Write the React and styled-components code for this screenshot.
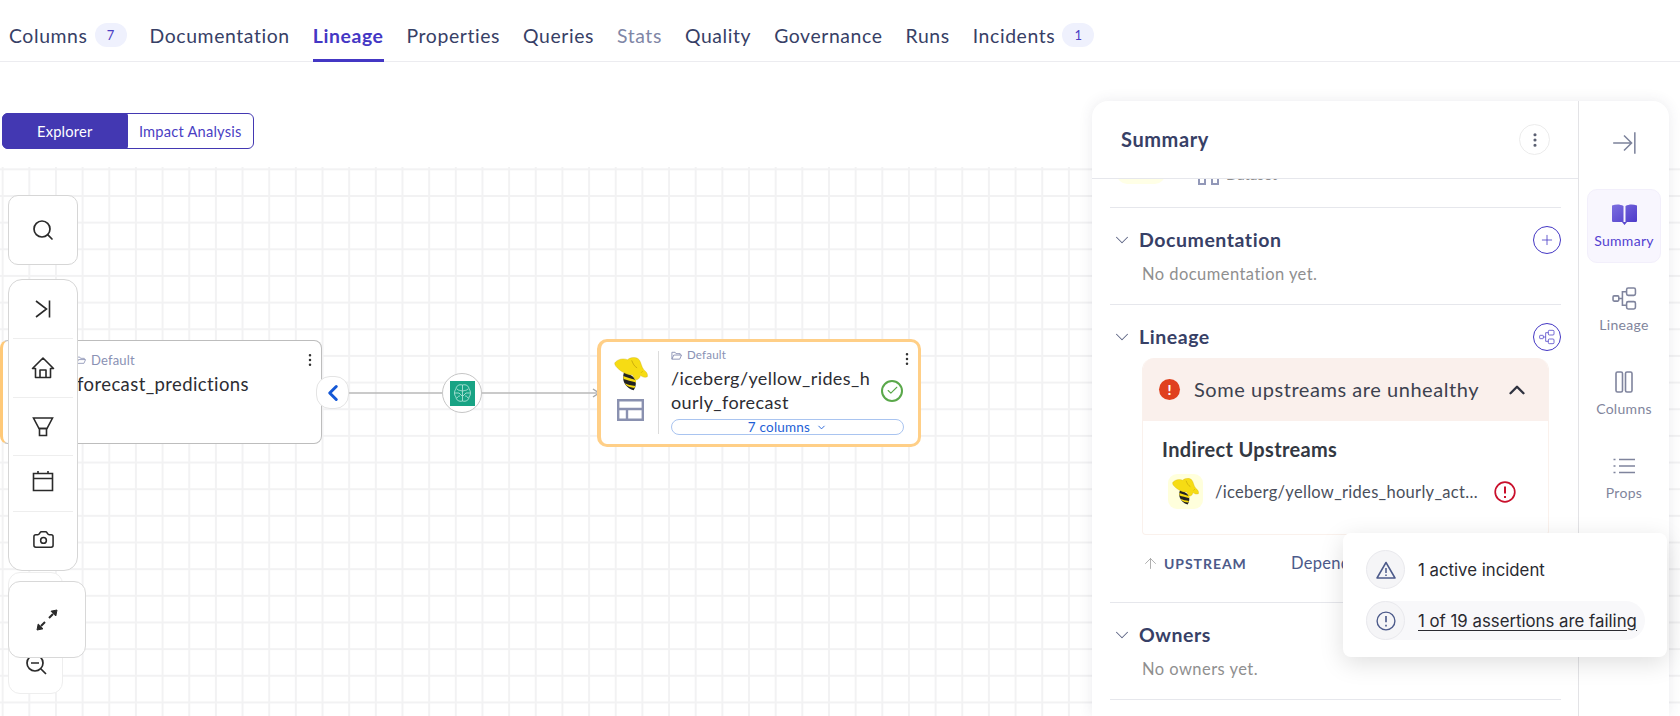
import React from "react";
import styled, { createGlobalStyle } from "styled-components";
import { Search, Camera, MoreVertical, Plus, ChevronDown, ChevronUp, ArrowUp, ChevronLeft, Check } from "lucide-react";

const Global = createGlobalStyle`
  html, body { margin: 0; padding: 0; background: #fff; }
  body { font-family: "Lato", "Noto Sans", sans-serif; color: #374066; }
  * { box-sizing: border-box; }
`;

const tabs = [
  { label: "Columns", badge: 7 },
  { label: "Documentation" },
  { label: "Lineage", active: true },
  { label: "Properties" },
  { label: "Queries" },
  { label: "Stats", muted: true },
  { label: "Quality" },
  { label: "Governance" },
  { label: "Runs" },
  { label: "Incidents", badge: 1 },
];

function HiveLogo({ size = 34 }) {
  return (
    <svg width={size} height={size} viewBox="0 0 100 100">
      <path d="M30 44C40 50 52 52 60 62C66 74 66 86 58 98C44 94 32 84 28 70C26 60 27 50 30 44Z" fill="#222" />
      <path d="M27 56C38 60 50 64 64 68L65 75C50 72 38 68 28 65ZM32 77C40 81 50 84 63 85L60 91C50 90 42 87 37 84Z" fill="#f5d90f" />
      <path d="M2 18C8 8 24 2 40 8C48 0 66 -2 74 8C80 16 80 28 88 38C96 44 100 50 98 58C90 62 82 58 78 54C76 62 70 70 62 66C58 60 56 56 54 52C40 54 24 44 14 36C8 30 2 26 2 18Z" fill="#f6dc14" stroke="#c9a90a" strokeWidth="1" />
      <path d="M52 10C56 20 60 28 68 32M84 42L80 46" fill="none" stroke="#b8980a" strokeWidth="2" />
    </svg>
  );
}

function CollapseIcon() {
  return (
    <svg width="26" height="26" viewBox="0 0 24 24" fill="none" stroke="#7c829b" strokeWidth="1.4">
      <path d="M2 12H19M12 5L19 12L12 19M22 2V22" />
    </svg>
  );
}

function SkipIcon() {
  return (
    <svg width="18" height="18" viewBox="0 0 18 18" fill="none" stroke="#2a2a2a" strokeWidth="1.6">
      <path d="M2 1L12.5 9L2 17M15.5 0.5V17.5" />
    </svg>
  );
}

function HomeIcon() {
  return (
    <svg width="24" height="24" viewBox="0 0 24 24" fill="none" stroke="#2a2a2a" strokeWidth="1.6" strokeLinejoin="round">
      <path d="M1.5 12.5L12 2L22.5 12.5H19.5V21.5H4.5V12.5Z" />
      <path d="M9 21.5V14H15V21.5" />
    </svg>
  );
}

function FunnelIcon() {
  return (
    <svg width="22" height="20" viewBox="0 0 22 20" fill="none" stroke="#2a2a2a" strokeWidth="1.6">
      <path d="M1.5 1H20.5L15 11.5H7Z" />
      <path d="M7.5 11.5H14.5V18.5H7.5Z" />
    </svg>
  );
}

function CalendarIcon() {
  return (
    <svg width="22" height="22" viewBox="0 0 22 22" fill="none" stroke="#2a2a2a" strokeWidth="1.6">
      <path d="M1.5 3.5H20.5V20.5H1.5ZM1.5 8.5H20.5M6 1V4M16 1V4" />
    </svg>
  );
}

function ExpandIcon() {
  return (
    <svg width="22" height="22" viewBox="0 0 22 22" fill="#2a2a2a" stroke="#2a2a2a">
      <path d="M21 1L15 2.2L19.8 7Z" />
      <path d="M1 21L7 19.8L2.2 15Z" />
      <path d="M17 5L13 9M9 13L5 17" fill="none" strokeWidth="2" />
    </svg>
  );
}

function ZoomOutIcon() {
  return (
    <svg width="22" height="22" viewBox="0 0 22 22" fill="none" stroke="#2a2a2a" strokeWidth="1.7">
      <circle cx="10" cy="10" r="8" />
      <path d="M6 10H14M16 16L21 21" />
    </svg>
  );
}

function FolderIcon({ size = 10, color = "#8a91b4" }) {
  return (
    <svg width={size} height={size} viewBox="0 0 12 12" fill="none" stroke={color} strokeWidth="1">
      <path d="M1 10V2.5H4.5L5.5 4H10V5.5M1 10L3 5.5H11.5L9.5 10Z" />
    </svg>
  );
}

function TableIcon() {
  return (
    <svg width="27" height="22" viewBox="0 0 27 22" fill="none" stroke="#8a91b0" strokeWidth="2.4">
      <path d="M1.2 1.2H25.8V20.8H1.2ZM1.2 10H25.8M10 10V20.8" />
    </svg>
  );
}

function BrainIcon() {
  return (
    <svg width="25" height="25" viewBox="0 0 25 25">
      <rect width="25" height="25" fill="#18a384" />
      <g fill="none" stroke="#bfeadf" strokeWidth="0.8">
        <path d="M12.5 4C9 3 6 5 6 8C4 10 4 14 6 16C6 19 9 21 12.5 20C16 21 19 19 19 16C21 14 21 10 19 8C19 5 16 3 12.5 4Z" />
        <path d="M12.5 4V20M7 8C9 10 10 9 12 10M18 8C16 10 15 9 13 10M5 12H9L12 15M20 12H16L13 15M7 17C8 15 9 15 10 15M18 17C17 15 16 15 15 15" />
      </g>
    </svg>
  );
}

function TreeIcon({ size = 16, color = "#4437c4", width = 1.1 }) {
  return (
    <svg width={size} height={size} viewBox="0 0 24 24" fill="none" stroke={color} strokeWidth={width}>
      <rect x="1" y="9.5" width="5.5" height="5" rx="1" />
      <rect x="14" y="2" width="8.5" height="7" rx="1.5" />
      <rect x="14" y="15" width="8.5" height="7" rx="1.5" />
      <path d="M6.5 12H10M14 5.5H10V18.5H14" />
    </svg>
  );
}

function BookIcon() {
  return (
    <svg width="25" height="21" viewBox="0 0 25 21">
      <defs>
        <linearGradient id="bookFill" x1="0" y1="0" x2="1" y2="1">
          <stop offset="0" stopColor="#7d6fe0" />
          <stop offset="1" stopColor="#4a37c8" />
        </linearGradient>
      </defs>
      <path d="M0 1.5C4 0 8 0 11.5 2V18H1.5C0.5 18 0 17.5 0 16.5ZM25 1.5C21 0 17 0 13.5 2V18H23.5C24.5 18 25 17.5 25 16.5ZM10 18H15L12.5 21Z" fill="url(#bookFill)" />
    </svg>
  );
}

function ColumnsIcon() {
  return (
    <svg width="18" height="22" viewBox="0 0 18 22" fill="none" stroke="#7f849d" strokeWidth="1.6">
      <rect x="1" y="1" width="6.5" height="20" rx="1.5" />
      <rect x="10.5" y="1" width="6.5" height="20" rx="1.5" />
    </svg>
  );
}

function PropsIcon() {
  return (
    <svg width="22" height="16" viewBox="0 0 22 16" fill="none" stroke="#7f849d" strokeWidth="1.5">
      <path d="M6 1.5H22M6 8H22M6 14.5H22M0.5 1.5H2.5M0.5 8H2.5M0.5 14.5H2.5" />
    </svg>
  );
}

function AlertCircle({ size = 22, color = "#c9102c", width = 1.7 }) {
  return (
    <svg width={size} height={size} viewBox="0 0 22 22" fill="none" stroke={color} strokeWidth={width}>
      <circle cx="11" cy="11" r="9.8" />
      <path d="M11 5.5V12.5M11 15V17" strokeWidth={width + 0.3} />
    </svg>
  );
}

function WarningIcon() {
  return (
    <svg width="20" height="18" viewBox="0 0 20 18" fill="none" stroke="#4c5a8a" strokeWidth="1.5" strokeLinejoin="round">
      <path d="M10 1.5L19 17H1Z" />
      <path d="M10 7V12M10 13.5V15" />
    </svg>
  );
}

export default function App() {
  return (
    <Page>
      <Global />
      <TabBar>
        {tabs.map((t) => (
          <Tab key={t.label} $active={t.active} $muted={t.muted}>
            {t.label}
            {t.badge && <Badge>{t.badge}</Badge>}
          </Tab>
        ))}
      </TabBar>

      <Toggle>
        <ToggleOption $on>Explorer</ToggleOption>
        <ToggleOption>Impact Analysis</ToggleOption>
      </Toggle>

      <Canvas>
        <NodeOne>
          <Kebab $top={11} $right={3}><MoreVertical size={16} strokeWidth={1.8} color="#333" /></Kebab>
          <NodePath>
            <FolderIcon size={10} />
            Default
          </NodePath>
          <NodeName>forecast_predictions</NodeName>
        </NodeOne>

        <Edges width="290" height="20" viewBox="0 0 290 20" fill="none">
          <path d="M0 10H93M132 10H248" stroke="#b9b9b9" strokeWidth="1.6" />
          <path d="M244 6L250 10L244 14" stroke="#a8a8a8" strokeWidth="1.5" />
        </Edges>
        <CollapseEdge><ChevronLeft size={26} strokeWidth={2.8} color="#1558d6" /></CollapseEdge>
        <TaskNode><BrainIcon /></TaskNode>

        <NodeTwo>
          <NodeLogos>
            <HiveLogo size={34} />
            <TableIcon />
          </NodeLogos>
          <NodeBody>
            <NodePathSmall>
              <FolderIcon size={11} />
              Default
            </NodePathSmall>
            <TitleRow>
              <NodeTitle>/iceberg/yellow_rides_h<br />ourly_forecast</NodeTitle>
              <HealthyMark><Check size={13} strokeWidth={2} color="#5aa84a" /></HealthyMark>
            </TitleRow>
            <ColumnsPill>
              7 columns <ChevronDown size={11} strokeWidth={2} />
            </ColumnsPill>
          </NodeBody>
          <Kebab $top={9} $right={3}><MoreVertical size={16} strokeWidth={1.8} color="#333" /></Kebab>
        </NodeTwo>

        <ZoomBack><ZoomOutSlot><ZoomOutIcon /></ZoomOutSlot></ZoomBack>
        <Controls>
          <ControlCard><Search size={24} strokeWidth={1.7} color="#2a2a2a" /></ControlCard>
          <ControlGroup>
            <ControlRow $h={59} $line $lift={1}><SkipIcon /></ControlRow>
            <ControlRow $h={59} $line><HomeIcon /></ControlRow>
            <ControlRow $h={58} $line><FunnelIcon /></ControlRow>
            <ControlRow $h={56} $line $lift={5}><CalendarIcon /></ControlRow>
            <ControlRow $h={58} $lift={3}><Camera size={23} strokeWidth={1.6} color="#2a2a2a" /></ControlRow>
          </ControlGroup>
        </Controls>
        <ExpandCard><ExpandIcon /></ExpandCard>
      </Canvas>

      <Panel>
        <PanelMain>
          <PanelHeader>
            <PanelTitle>Summary</PanelTitle>
            <RoundBtn><MoreVertical size={18} strokeWidth={2.2} color="#5b6072" /></RoundBtn>
          </PanelHeader>
          <Scroller>
            <Identity>
              <IdentityLogo />
              <IdentityIcons><i /><i /></IdentityIcons>
              <IdentityText>Dataset</IdentityText>
            </Identity>

            <Section>
              <SectionHead>
                <ChevronDown size={22} strokeWidth={1.1} color="#5c6484" />
                <SectionTitle>Documentation</SectionTitle>
                <ActionBtn><Plus size={16} strokeWidth={1.2} /></ActionBtn>
              </SectionHead>
              <EmptyText>No documentation yet.</EmptyText>
            </Section>

            <Section>
              <SectionHead>
                <ChevronDown size={22} strokeWidth={1.1} color="#5c6484" />
                <SectionTitle>Lineage</SectionTitle>
                <ActionBtn><TreeIcon /></ActionBtn>
              </SectionHead>
              <HealthBox>
                <HealthHead>
                  <RedDot>!</RedDot>
                  <HealthText>Some upstreams are unhealthy</HealthText>
                  <ChevronUp size={26} strokeWidth={2.2} color="#2f3340" />
                </HealthHead>
                <HealthBody>
                  <HealthSub>Indirect Upstreams</HealthSub>
                  <UpstreamRow>
                    <LogoTile><HiveLogo size={27} /></LogoTile>
                    <UpstreamName>/iceberg/yellow_rides_hourly_actuals</UpstreamName>
                    <AlertCircle />
                  </UpstreamRow>
                </HealthBody>
              </HealthBox>
              <FooterRow>
                <ArrowUp size={17} strokeWidth={1.2} color="#a0a0a0" />
                <UpstreamLabel>UPSTREAM</UpstreamLabel>
                <DepLabel>Dependencies</DepLabel>
              </FooterRow>
            </Section>

            <Section>
              <SectionHead>
                <ChevronDown size={22} strokeWidth={1.1} color="#5c6484" />
                <SectionTitle>Owners</SectionTitle>
              </SectionHead>
              <EmptyText>No owners yet.</EmptyText>
            </Section>
          </Scroller>
        </PanelMain>

        <Rail>
          <RailCollapse><CollapseIcon /></RailCollapse>
          <RailItem $active><RailIcon><BookIcon /></RailIcon>Summary</RailItem>
          <RailItem><RailIcon><TreeIcon size={25} color="#7f849d" width={1.5} /></RailIcon>Lineage</RailItem>
          <RailItem><RailIcon><ColumnsIcon /></RailIcon>Columns</RailItem>
          <RailItem><RailIcon><PropsIcon /></RailIcon>Props</RailItem>
        </Rail>
      </Panel>

      <Popover>
        <PopRow>
          <PopIcon><WarningIcon /></PopIcon>
          <PopText>1 active incident</PopText>
        </PopRow>
        <PopRow $pill>
          <PopIcon><AlertCircle size={20} color="#4c5a8a" width={1.5} /></PopIcon>
          <PopLink>1 of 19 assertions are failing</PopLink>
        </PopRow>
      </Popover>
    </Page>
  );
}

const Page = styled.div`
  position: relative;
  width: 1680px;
  height: 716px;
  overflow: hidden;
  display: flex;
  flex-direction: column;
  background: #fff;
`;

const TabBar = styled.div`
  display: flex;
  gap: 23px;
  height: 62px;
  padding-left: 9px;
  border-bottom: 1px solid #ececf0;
  flex: none;
`;

const Tab = styled.div`
  display: flex;
  align-items: center;
  gap: 7px;
  height: 62px;
  padding-top: 12px;
  border-bottom: 3px solid ${(p) => (p.$active ? "#4437c4" : "transparent")};
  font-size: 19.4px;
  letter-spacing: 0.6px;
  font-weight: ${(p) => (p.$active ? 700 : 400)};
  color: ${(p) => (p.$active ? "#4437c4" : p.$muted ? "#7f86a6" : "#374066")};
`;

const Badge = styled.span`
  width: 32px;
  height: 24px;
  margin-top: -1px;
  border-radius: 12px;
  background: #eff1fd;
  color: #4b3fc4;
  font-size: 13px;
  display: flex;
  align-items: center;
  justify-content: center;
  letter-spacing: 0;
  font-weight: 400;
`;

const Toggle = styled.div`
  display: flex;
  flex: none;
  width: 252px;
  height: 36px;
  margin: 51px 0 18px 2px;
  border: 1px solid #4338b2;
  border-radius: 6px;
`;

const ToggleOption = styled.div`
  flex: 1;
  display: flex;
  align-items: center;
  justify-content: center;
  margin: ${(p) => (p.$on ? "-1px 0 -1px -1px" : "0")};
  border-radius: ${(p) => (p.$on ? "6px 3px 3px 6px" : "0")};
  background: ${(p) => (p.$on ? "#4338b2" : "transparent")};
  color: ${(p) => (p.$on ? "#fff" : "#4b3fc4")};
  font-size: 14.7px;
  letter-spacing: 0.2px;
`;

const Canvas = styled.div`
  position: relative;
  flex: 1;
  background-color: #fff;
  background-image:
    linear-gradient(#f2f2f3 2px, transparent 2px),
    linear-gradient(90deg, #f2f2f3 2px, transparent 2px);
  background-size: 26.67px 26.67px;
  background-position: 1.67px 1.33px;
`;

const Kebab = styled.div`
  position: absolute;
  top: ${(p) => p.$top}px;
  right: ${(p) => p.$right}px;
  display: flex;
`;

const NodeOne = styled.div`
  position: absolute;
  left: 0;
  top: 173px;
  width: 322px;
  height: 104px;
  background: #fff;
  border: 1px solid #bdbdbd;
  border-left: 3px solid #ffc978;
  border-radius: 8px;
  padding: 11px 0 0 73px;
`;

const NodePath = styled.div`
  display: flex;
  align-items: center;
  gap: 5px;
  font-size: 13px;
  line-height: 16px;
  letter-spacing: 0.2px;
  color: #8a91b4;
`;

const NodeName = styled.div`
  margin: 4px 0 0 1px;
  font-size: 18.5px;
  line-height: 24px;
  letter-spacing: 0.4px;
  color: #2d2d33;
`;

const Edges = styled.svg`
  position: absolute;
  left: 349px;
  top: 216px;
`;

const CollapseEdge = styled.div`
  position: absolute;
  left: 316px;
  top: 209px;
  width: 33px;
  height: 33px;
  display: flex;
  align-items: center;
  justify-content: center;
  background: #fff;
  border: 1px solid #e4e4e4;
  border-radius: 14px;
`;

const TaskNode = styled.div`
  position: absolute;
  left: 442px;
  top: 206px;
  width: 40px;
  height: 40px;
  border: 1px solid #c6c6c6;
  border-radius: 50%;
  background: #fff;
  display: flex;
  align-items: center;
  justify-content: center;
`;

const NodeTwo = styled.div`
  position: absolute;
  left: 597px;
  top: 172px;
  width: 324px;
  height: 108px;
  display: flex;
  background: #fff;
  border: 3px solid #ffcf87;
  border-left-width: 4px;
  border-radius: 10px;
`;

const NodeLogos = styled.div`
  width: 58px;
  margin: 9px 0 10px;
  padding: 6px 0 0 2px;
  display: flex;
  flex-direction: column;
  align-items: center;
  gap: 8px;
  border-right: 1px solid #dcdcdc;
  flex: none;
`;

const NodeBody = styled.div`
  flex: 1;
  padding: 6px 14px 0 12px;
`;

const NodePathSmall = styled.div`
  display: flex;
  align-items: center;
  gap: 5px;
  font-size: 11.5px;
  line-height: 14px;
  letter-spacing: 0.2px;
  color: #8a91b4;
`;

const TitleRow = styled.div`
  display: flex;
  align-items: center;
  gap: 5px;
  margin-top: 5px;
`;

const NodeTitle = styled.div`
  width: 205px;
  font-size: 18px;
  line-height: 23.5px;
  letter-spacing: 0.4px;
  white-space: nowrap;
  color: #2d2d33;
`;

const HealthyMark = styled.div`
  width: 22px;
  height: 22px;
  flex: none;
  display: flex;
  align-items: center;
  justify-content: center;
  border: 2px solid #5aa84a;
  border-radius: 50%;
`;

const ColumnsPill = styled.div`
  margin-top: 5px;
  height: 16px;
  display: flex;
  align-items: center;
  justify-content: center;
  gap: 6px;
  border: 1px solid #a9c4f0;
  border-radius: 8px;
  color: #1f5fd6;
  font-size: 13.5px;
  letter-spacing: 0.2px;
`;

const Controls = styled.div`
  position: absolute;
  left: 8px;
  top: 28px;
  width: 70px;
  display: flex;
  flex-direction: column;
  gap: 14px;
`;

const ControlCard = styled.div`
  height: 70px;
  display: flex;
  align-items: center;
  justify-content: center;
  background: #fff;
  border: 1px solid #d6d6d6;
  border-radius: 10px;
`;

const ControlGroup = styled.div`
  display: flex;
  flex-direction: column;
  background: #fff;
  border: 1px solid #d6d6d6;
  border-radius: 14px;
  padding: 0 4px;
`;

const ControlRow = styled.div`
  height: ${(p) => p.$h}px;
  padding-bottom: ${(p) => p.$lift || 0}px;
  display: flex;
  align-items: center;
  justify-content: center;
  border-bottom: ${(p) => (p.$line ? "1px solid #eeeeee" : "none")};
`;

const ZoomBack = styled.div`
  position: absolute;
  left: 8px;
  top: 405px;
  width: 55px;
  height: 122px;
  background: #fff;
  border: 1px solid #eeeeee;
  border-radius: 12px;
`;

const ZoomOutSlot = styled.div`
  position: absolute;
  left: 16px;
  bottom: 18px;
  display: flex;
`;

const ExpandCard = styled.div`
  position: absolute;
  left: 8px;
  top: 414px;
  width: 78px;
  height: 77px;
  display: flex;
  align-items: center;
  justify-content: center;
  background: #fff;
  border: 1px solid #d8d8d8;
  border-radius: 12px;
`;

const Panel = styled.div`
  position: absolute;
  left: 1092px;
  top: 101px;
  right: 11px;
  bottom: 0;
  display: flex;
  background: #fff;
  border-radius: 16px 16px 0 0;
  box-shadow: 0 0 14px rgba(60, 60, 90, 0.1);
`;

const PanelMain = styled.div`
  width: 486px;
  flex: none;
  display: flex;
  flex-direction: column;
  min-height: 0;
`;

const PanelHeader = styled.div`
  height: 78px;
  flex: none;
  display: flex;
  align-items: center;
  justify-content: space-between;
  padding: 0 28px 0 29px;
  border-bottom: 1px solid #e6e7ec;
`;

const PanelTitle = styled.div`
  padding-bottom: 2px;
  font-size: 20px;
  font-weight: 700;
  letter-spacing: 0.6px;
  color: #374066;
`;

const RoundBtn = styled.div`
  width: 31px;
  height: 31px;
  display: flex;
  align-items: center;
  justify-content: center;
  border: 1px solid #ececec;
  border-radius: 50%;
`;

const Scroller = styled.div`
  flex: 1;
  min-height: 0;
  overflow: hidden;
  padding: 0 17px 0 18px;
`;

const Identity = styled.div`
  height: 29px;
  display: flex;
  align-items: flex-start;
  overflow: hidden;
  border-bottom: 1px solid #e6e7ec;
`;

const IdentityLogo = styled.div`
  width: 48px;
  height: 48px;
  margin: -43px 0 0 7px;
  border-radius: 10px;
  background: #ffffe6;
`;

const IdentityIcons = styled.div`
  display: flex;
  gap: 5px;
  margin: -15px 0 0 33px;
  i {
    display: block;
    width: 8px;
    height: 21px;
    border: 2px solid #9298b8;
  }
`;

const IdentityText = styled.div`
  margin: -15px 0 0 7px;
  font-size: 15px;
  line-height: 20px;
  color: #8c8c8c;
`;

const Section = styled.div`
  padding: 18px 0 20px;
  border-bottom: 1px solid #e6e7ec;
`;

const SectionHead = styled.div`
  height: 28px;
  display: flex;
  align-items: center;
  gap: 6px;
  padding-left: 1px;
`;

const SectionTitle = styled.div`
  flex: 1;
  padding-bottom: 2px;
  font-size: 19.5px;
  font-weight: 700;
  letter-spacing: 0.55px;
  color: #374066;
`;

const ActionBtn = styled.div`
  width: 28px;
  height: 28px;
  display: flex;
  align-items: center;
  justify-content: center;
  color: #4437c4;
  border: 1px solid #4437c4;
  border-radius: 50%;
`;

const EmptyText = styled.div`
  margin: 10px 0 0 32px;
  font-size: 16.5px;
  line-height: 20px;
  letter-spacing: 0.45px;
  color: #8f8f8f;
`;

const HealthBox = styled.div`
  width: 407px;
  margin: 7px 0 0 32px;
  border-radius: 12px 12px 4px 4px;
  overflow: hidden;
  border: 1px solid #faf1ec;
  border-top: none;
`;

const HealthHead = styled.div`
  height: 63px;
  display: flex;
  align-items: center;
  padding: 0 18px 0 16px;
  background: #faf0ec;
`;

const RedDot = styled.div`
  width: 21px;
  height: 21px;
  flex: none;
  display: flex;
  align-items: center;
  justify-content: center;
  background: #e0401e;
  color: #fff;
  border-radius: 50%;
  font-size: 14px;
  font-weight: 900;
`;

const HealthText = styled.div`
  flex: 1;
  margin-left: 14px;
  padding-bottom: 2px;
  font-size: 20px;
  letter-spacing: 0.55px;
  color: #3d424f;
`;

const HealthBody = styled.div`
  height: 113px;
  padding: 17px 0 0 19px;
`;

const HealthSub = styled.div`
  font-size: 20px;
  line-height: 22px;
  font-weight: 700;
  letter-spacing: 0.35px;
  color: #333842;
`;

const UpstreamRow = styled.div`
  display: flex;
  align-items: center;
  margin: 14px 0 0 6px;
`;

const LogoTile = styled.div`
  width: 35px;
  height: 35px;
  flex: none;
  display: flex;
  align-items: center;
  justify-content: center;
  background: #ffffdc;
  border-radius: 9px;
`;

const UpstreamName = styled.div`
  width: 266px;
  margin: 0 13px 0 12px;
  font-size: 16.5px;
  letter-spacing: 0.3px;
  white-space: nowrap;
  overflow: hidden;
  text-overflow: ellipsis;
  color: #4a4f5c;
`;

const FooterRow = styled.div`
  height: 28px;
  display: flex;
  align-items: center;
  margin: 14px 0 5px 32px;
  color: #4c5a8a;
`;

const UpstreamLabel = styled.div`
  margin-left: 5px;
  width: 127px;
  font-size: 14px;
  font-weight: 700;
  letter-spacing: 0.95px;
`;

const DepLabel = styled.div`
  font-size: 16.5px;
  letter-spacing: 0.3px;
`;

const Rail = styled.div`
  flex: 1;
  border-left: 1px solid #e3e3e6;
  display: flex;
  flex-direction: column;
  align-items: center;
  gap: 10px;
`;

const RailCollapse = styled.div`
  height: 84px;
  margin-bottom: -6px;
  flex: none;
  display: flex;
  align-items: center;
  justify-content: center;
`;

const RailItem = styled.div`
  width: 74px;
  height: 74px;
  flex: none;
  padding-top: 12px;
  display: flex;
  flex-direction: column;
  align-items: center;
  border-radius: 10px;
  font-size: 14px;
  letter-spacing: 0.3px;
  background: ${(p) => (p.$active ? "#f8f6fe" : "transparent")};
  border: 1px solid ${(p) => (p.$active ? "#f2effb" : "transparent")};
  color: ${(p) => (p.$active ? "#533fd1" : "#81859c")};
`;

const RailIcon = styled.div`
  height: 24px;
  margin-bottom: 6px;
  display: flex;
  align-items: center;
  justify-content: center;
`;

const Popover = styled.div`
  position: absolute;
  left: 1343px;
  top: 533px;
  width: 324px;
  height: 124px;
  padding: 17px 0 0 23px;
  display: flex;
  flex-direction: column;
  gap: 12px;
  background: #fff;
  border-radius: 8px;
  box-shadow: 0 6px 24px rgba(0, 0, 0, 0.13);
`;

const PopRow = styled.div`
  display: flex;
  align-items: center;
  gap: 13px;
  width: 279px;
  height: 39px;
  border-radius: 20px;
  background: ${(p) => (p.$pill ? "#f8f8fa" : "transparent")};
`;

const PopIcon = styled.div`
  width: 39px;
  height: 39px;
  flex: none;
  display: flex;
  align-items: center;
  justify-content: center;
  background: #f5f5f7;
  border: 1px solid #e9e9ed;
  border-radius: 50%;
`;

const PopText = styled.div`
  font-family: "Inter", sans-serif;
  font-size: 16.8px;
  color: #2a2a30;
`;

const PopLink = styled(PopText)`
  text-decoration: underline;
  text-underline-offset: 3px;
`;
